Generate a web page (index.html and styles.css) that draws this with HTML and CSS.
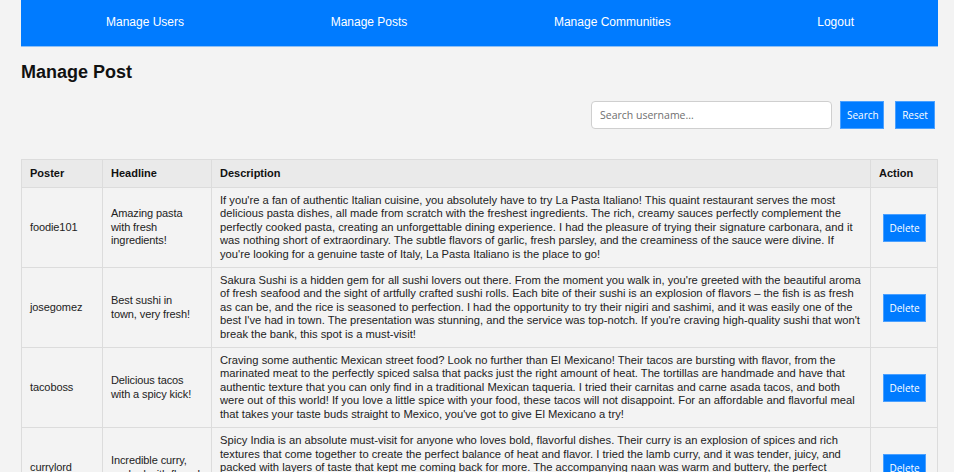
FILE: index.html
```html
<!DOCTYPE html>
<html lang="en">
<head>
<meta charset="utf-8">
<title>Manage Post</title>
<link rel="stylesheet" href="styles.css">
</head>
<body>
<div class="page">
  <nav class="navbar">
    <a class="nav-link" href="#">Manage Users</a>
    <a class="nav-link" href="#">Manage Posts</a>
    <a class="nav-link" href="#">Manage Communities</a>
    <a class="nav-link" href="#">Logout</a>
  </nav>

  <h1 class="title">Manage Post</h1>

  <div class="search-bar">
    <input class="search-input" type="text" placeholder="Search username...">
    <button class="btn btn-search">Search</button>
    <button class="btn btn-reset">Reset</button>
  </div>

  <table class="posts">
    <colgroup>
      <col class="col-poster">
      <col class="col-headline">
      <col class="col-desc">
      <col class="col-action">
    </colgroup>
    <thead>
      <tr>
        <th>Poster</th>
        <th>Headline</th>
        <th>Description</th>
        <th>Action</th>
      </tr>
    </thead>
    <tbody>
      <tr>
        <td>foodie101</td>
        <td class="headline">Amazing pasta with fresh ingredients!</td>
        <td class="desc">If you're a fan of authentic Italian cuisine, you absolutely have to try La Pasta Italiano! This quaint restaurant serves the most delicious pasta dishes, all made from scratch with the freshest ingredients. The rich, creamy sauces perfectly complement the perfectly cooked pasta, creating an unforgettable dining experience. I had the pleasure of trying their signature carbonara, and it was nothing short of extraordinary. The subtle flavors of garlic, fresh parsley, and the creaminess of the sauce were divine. If you're looking for a genuine taste of Italy, La Pasta Italiano is the place to go!</td>
        <td class="action"><button class="btn btn-delete">Delete</button></td>
      </tr>
      <tr>
        <td>josegomez</td>
        <td class="headline">Best sushi in town, very fresh!</td>
        <td class="desc">Sakura Sushi is a hidden gem for all sushi lovers out there. From the moment you walk in, you're greeted with the beautiful aroma of fresh seafood and the sight of artfully crafted sushi rolls. Each bite of their sushi is an explosion of flavors – the fish is as fresh as can be, and the rice is seasoned to perfection. I had the opportunity to try their nigiri and sashimi, and it was easily one of the best I've had in town. The presentation was stunning, and the service was top-notch. If you're craving high-quality sushi that won't break the bank, this spot is a must-visit!</td>
        <td class="action"><button class="btn btn-delete">Delete</button></td>
      </tr>
      <tr>
        <td>tacoboss</td>
        <td class="headline">Delicious tacos with a spicy kick!</td>
        <td class="desc">Craving some authentic Mexican street food? Look no further than El Mexicano! Their tacos are bursting with flavor, from the marinated meat to the perfectly spiced salsa that packs just the right amount of heat. The tortillas are handmade and have that authentic texture that you can only find in a traditional Mexican taqueria. I tried their carnitas and carne asada tacos, and both were out of this world! If you love a little spice with your food, these tacos will not disappoint. For an affordable and flavorful meal that takes your taste buds straight to Mexico, you've got to give El Mexicano a try!</td>
        <td class="action"><button class="btn btn-delete">Delete</button></td>
      </tr>
      <tr>
        <td>currylord</td>
        <td class="headline">Incredible curry, packed with flavor!</td>
        <td class="desc">Spicy India is an absolute must-visit for anyone who loves bold, flavorful dishes. Their curry is an explosion of spices and rich textures that come together to create the perfect balance of heat and flavor. I tried the lamb curry, and it was tender, juicy, and packed with layers of taste that kept me coming back for more. The accompanying naan was warm and buttery, the perfect complement to the rich curry. The staff were friendly and attentive, and the atmosphere was warm and inviting. If you're a fan of Indian cuisine, Spicy India is a must-try!</td>
        <td class="action"><button class="btn btn-delete">Delete</button></td>
      </tr>
    </tbody>
  </table>
</div>
</body>
</html>
```

FILE: styles.css
```css
html, body {
  margin: 0;
  padding: 0;
  background: #f3f3f3;
}

body {
  font-family: "Liberation Sans", Arial, sans-serif;
  color: #222;
}

.page {
  margin: 0 16px 0 21px;
}

.navbar {
  display: flex;
  justify-content: space-between;
  background: #007bff;
  padding: 15px 84px 17px 85px;
  border-bottom: 1px solid #8fc0f5;
}

.nav-link {
  color: #ffffff;
  text-decoration: none;
  font-size: 12px;
  line-height: 14px;
}

.title {
  font-size: 18px;
  font-weight: bold;
  color: #111;
  margin: 15px 0 0 0;
  line-height: 21px;
}

.search-bar {
  display: flex;
  justify-content: flex-end;
  align-items: center;
  margin: 18px 3px 30px 0;
}

.search-input {
  box-sizing: border-box;
  width: 241px;
  height: 28px;
  border: 1px solid #cfcfcf;
  border-radius: 4px;
  background: #fff;
  padding: 0 8px;
  font-family: "Open Sans", sans-serif;
  font-size: 10.5px;
  color: #333;
  margin-right: 8px;
}

.search-input::placeholder {
  color: #6f6f6f;
}

.btn {
  box-sizing: border-box;
  height: 28px;
  background: #007bff;
  color: #fff;
  border: 1px solid #4aa0ff;
  font-family: "Open Sans", sans-serif;
  font-size: 10px;
  padding: 0 6px;
  cursor: pointer;
}

.btn-search {
  width: 44px;
  margin-right: 11px;
}

.btn-reset {
  width: 40px;
}

.btn-delete {
  width: 43px;
}

.posts {
  width: 917px;
  border-collapse: collapse;
  table-layout: fixed;
  font-size: 11px;
  letter-spacing: -0.1px;
  line-height: 13.4px;
}

.col-poster { width: 81px; }
.col-headline { width: 109px; }
.col-action { width: 67px; }

.posts th,
.posts td {
  border: 1px solid #dcdcdc;
  padding: 6px 8px;
  text-align: left;
  vertical-align: middle;
}

.posts th {
  background: #eaeaea;
  font-weight: bold;
  color: #111;
  letter-spacing: 0;
  padding-top: 7px;
  padding-bottom: 6.6px;
}

.posts td.headline {
  padding-right: 10.5px;
}

.posts td.desc {
  font-size: 11.2px;
  letter-spacing: 0;
}

.posts td.action {
  text-align: center;
}
```
